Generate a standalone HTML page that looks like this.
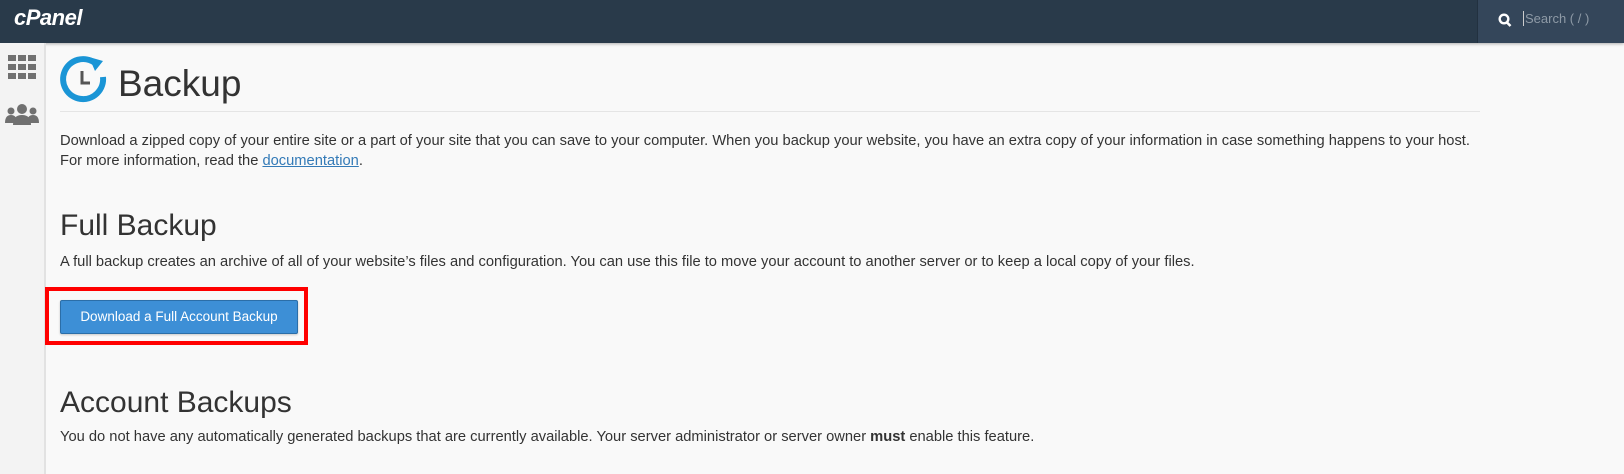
<!DOCTYPE html>
<html><head><style>
body{margin:0;width:1624px;height:474px;background:#f9f9f9;font-family:"Liberation Sans",sans-serif;color:#333;overflow:hidden;position:relative}
.hdr{position:absolute;left:0;top:0;width:1624px;height:43px;background:#293a4a;box-shadow:0 1px 3px rgba(0,0,0,.3)}
.logo{position:absolute;left:14px;top:5px;color:#fff;font-size:22px;font-weight:bold;font-style:italic;letter-spacing:-0.5px}
.srch{position:absolute;left:1477px;top:0;width:147px;height:43px;background:#34465a;border-left:1px solid #223140}
.srch span{position:absolute;left:45px;top:11px;color:#8e9aa6;font-size:13px;border-left:1px solid #ccc;padding-left:1px}
.side{position:absolute;left:0;top:43px;width:44px;height:431px;background:#f3f3f3;border-right:2px solid #e2e2e2}
.c{position:absolute;left:60px}
p{margin:0;font-size:14.7px;line-height:19.5px}
h2{margin:0;font-weight:normal;font-size:30px}
a{color:#337ab7}
</style></head><body>
<div class="hdr"><div class="logo">cPanel</div><div class="srch"><svg style="position:absolute;left:20px;top:13px" width="14" height="15" viewBox="0 0 14 15"><circle cx="6" cy="6" r="4.3" fill="none" stroke="#fff" stroke-width="2.4"/><path d="M9 9.5l3.5 3.5" stroke="#fff" stroke-width="2.6"/></svg><span>Search ( / )</span></div></div>
<div class="side">
<svg style="position:absolute;left:8px;top:12px" width="28" height="24"><g fill="#707070"><rect x="0" y="0" width="8" height="6"/><rect x="10" y="0" width="8" height="6"/><rect x="20" y="0" width="8" height="6"/><rect x="0" y="9" width="8" height="6"/><rect x="10" y="9" width="8" height="6"/><rect x="20" y="9" width="8" height="6"/><rect x="0" y="18" width="8" height="6"/><rect x="10" y="18" width="8" height="6"/><rect x="20" y="18" width="8" height="6"/></g></svg>
<svg style="position:absolute;left:5px;top:60px" width="34" height="22"><g fill="#707070"><circle cx="6" cy="8" r="3.5"/><circle cx="28" cy="8" r="3.5"/><circle cx="17" cy="6" r="5"/><path d="M0 20q0-8 6-8t6 8z"/><path d="M22 20q0-8 6-8t6 8z"/><path d="M8 22q0-10 9-10t9 10z"/></g></svg>
</div>
<svg style="position:absolute;left:59px;top:55px" width="50" height="50" viewBox="0 0 50 50"><path d="M36 8A20 20 0 1 0 44 22" fill="none" stroke="#1a95d6" stroke-width="6"/><path d="M30 2l14 4-8 10z" fill="#1a95d6"/><path d="M23 16v12h8" fill="none" stroke="#555" stroke-width="3"/></svg>
<div class="c" style="left:118px;top:63px;font-size:37px">Backup</div>
<div style="position:absolute;left:60px;top:111px;width:1420px;border-top:1px solid #e5e5e5"></div>
<div class="c" style="top:132px"><p>Download a zipped copy of your entire site or a part of your site that you can save to your computer. When you backup your website, you have an extra copy of your information in case something happens to your host.</p><p>For more information, read the <a href="#">documentation</a>.</p></div>
<h2 class="c" style="top:209px">Full Backup</h2>
<p class="c" style="top:253px">A full backup creates an archive of all of your website’s files and configuration. You can use this file to move your account to another server or to keep a local copy of your files.</p>
<div style="position:absolute;left:45px;top:287px;width:255px;height:50px;border:4px solid #f00"></div>
<div style="position:absolute;left:60px;top:300px;width:236px;height:32px;background:#3d8fd6;border:1px solid #2b6ea8;border-radius:2px;color:#fff;font-size:13.5px;text-align:center;line-height:32px;box-shadow:0 1px 2px rgba(0,0,0,.2)">Download a Full Account Backup</div>
<h2 class="c" style="top:386px">Account Backups</h2>
<p class="c" style="top:428px">You do not have any automatically generated backups that are currently available. Your server administrator or server owner <b>must</b> enable this feature.</p>
</body></html>
